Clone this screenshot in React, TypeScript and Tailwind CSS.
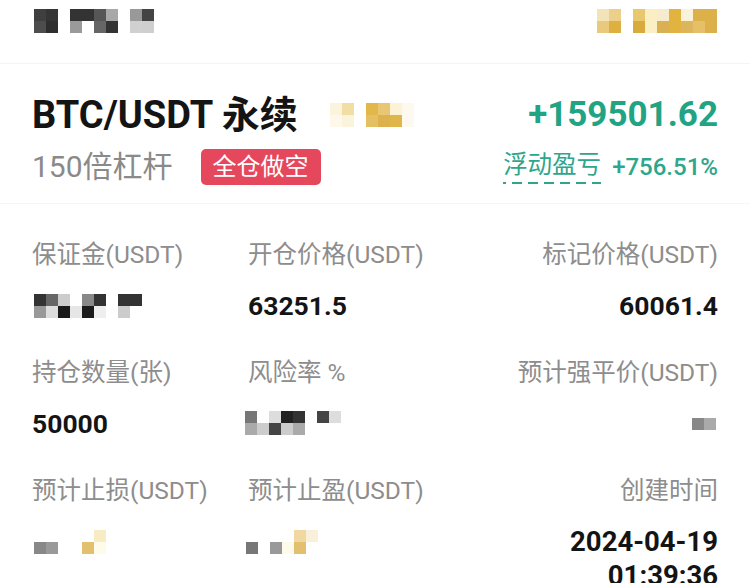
import React from "react";

type Col = [string, string];

// mosaic blocks that hide private values in the source picture
const topLeft: Col[] = [
  ["bg-[#3f3f3f]", "bg-[#4d4d4d]"],
  ["bg-[#353535]", "bg-[#2e2e2e]"],
  ["", ""],
  ["bg-[#333333]", "bg-[#9a9a9a]"],
  ["bg-[#333333]", ""],
  ["bg-[#565656]", "bg-[#666666]"],
  ["bg-[#a8a8a8]", "bg-[#333333]"],
  ["", ""],
  ["bg-[#999999]", "bg-[#d0d0d0]"],
  ["bg-[#444444]", "bg-[#cfcfcf]"],
];

const topRight: Col[] = [
  ["bg-[#f3e3b8]", "bg-[#e9c97c]"],
  ["bg-[#ecd08a]", "bg-[#ddb03f]"],
  ["", ""],
  ["bg-[#e8c76e]", "bg-[#d9ab3e]"],
  ["bg-[#fbeec2]", "bg-[#fbefc6]"],
  ["bg-[#f6eccd]", "bg-[#d9b152]"],
  ["bg-[#e2b33f]", "bg-[#e2b33f]"],
  ["bg-[#fbf3d9]", "bg-[#dcb55c]"],
  ["bg-[#ddb14a]", "bg-[#e5c068]"],
  ["bg-[#ddb14a]", "bg-[#ddb04a]"],
];

const titleTag: Col[] = [
  ["bg-[#fbf4dc]", "bg-[#fdf8ea]"],
  ["bg-[#f1dea4]", "bg-[#fbf4dc]"],
  ["", ""],
  ["bg-[#e3b84a]", "bg-[#e5c063]"],
  ["bg-[#e8c674]", "bg-[#ddb14d]"],
  ["bg-[#fcf3d6]", "bg-[#e0b54a]"],
  ["bg-[#fdf9ee]", "bg-[#fdf9f0]"],
];

const margin: Col[] = [
  ["bg-[#333333]", "bg-[#999999]"],
  ["bg-[#666666]", "bg-[#dddddd]"],
  ["bg-[#cccccc]", "bg-[#1a1a1a]"],
  ["", "bg-[#e6e6e6]"],
  ["bg-[#888888]", "bg-[#1a1a1a]"],
  ["bg-[#333333]", "bg-[#eeeeee]"],
  ["", ""],
  ["bg-[#333333]", "bg-[#cccccc]"],
  ["bg-[#333333]", ""],
];

const risk: Col[] = [
  ["bg-[#777777]", "bg-[#aaaaaa]"],
  ["", "bg-[#cccccc]"],
  ["bg-[#dddddd]", "bg-[#444444]"],
  ["bg-[#222222]", "bg-[#cccccc]"],
  ["bg-[#333333]", "bg-[#aaaaaa]"],
  ["", ""],
  ["bg-[#444444]", ""],
  ["bg-[#dddddd]", ""],
];

const liq: Col[] = [
  ["", "bg-[#888888]"],
  ["", "bg-[#aaaaaa]"],
];

const stopLoss: Col[] = [
  ["", "bg-[#888888]"],
  ["", "bg-[#999999]"],
  ["", ""],
  ["", ""],
  ["", "bg-[#e2c070]"],
  ["bg-[#f8ecc4]", "bg-[#fffbea]"],
];

const takeProfit: Col[] = [
  ["", "bg-[#777777]"],
  ["", ""],
  ["", "bg-[#999999]"],
  ["", "bg-[#fffbea]"],
  ["bg-[#f0d8a0]", "bg-[#e2c070]"],
  ["bg-[#f8f0da]", ""],
];

function Mosaic({ cols, className = "" }: { cols: Col[]; className?: string }) {
  return (
    <div className={`flex ${className}`}>
      {cols.map((c, i) => (
        <div key={i} className="flex flex-col">
          <div className={`h-3 w-3 ${c[0]}`} />
          <div className={`h-3 w-3 ${c[1]}`} />
        </div>
      ))}
    </div>
  );
}

function Label({ children, right }: { children: React.ReactNode; right?: boolean }) {
  return (
    <div className={`text-[24.5px] leading-[34px] text-[#8d8d8d] whitespace-nowrap ${right ? "text-right" : ""}`}>
      {children}
    </div>
  );
}

function Value({ children, right }: { children: React.ReactNode; right?: boolean }) {
  return (
    <div
      className={`mt-[17px] min-h-[34px] text-[26.5px] font-bold leading-[34px] text-[#141414] ${
        right ? "flex flex-col items-end text-right" : "flex items-center"
      }`}
    >
      {children}
    </div>
  );
}

export default function App() {
  return (
    <div className="h-[583px] w-[750px] overflow-hidden bg-white font-[Roboto,'Noto_Sans_CJK_SC',sans-serif]">
      {/* top bar */}
      <div className="flex h-[64px] items-start justify-between border-b border-[#f4f4f4] pl-[34px] pr-[33px] pt-[9px]">
        <Mosaic cols={topLeft} />
        <Mosaic cols={topRight} />
      </div>

      {/* position header */}
      <div className="border-b border-[#f6f6f6] px-8 pb-4 pt-[29px]">
        <div className="flex h-[44px] items-center justify-between">
          <div className="flex items-center">
            <span className="text-[38px] font-bold leading-[44px] text-[#141414]">BTC/USDT 永续</span>
            <Mosaic cols={titleTag} className="ml-8" />
          </div>
          <span className="text-[35px] font-bold leading-[44px] text-[#21a483]">+159501.62</span>
        </div>
        <div className="mt-[10px] flex h-[40px] items-center justify-between">
          <div className="flex items-center">
            <span className="text-[30px] leading-[40px] text-[#8a8a8a]">150倍杠杆</span>
            <span className="ml-7 flex h-[36px] items-center rounded-[5px] bg-[#e5475d] px-3 text-[24px] text-white">
              全仓做空
            </span>
          </div>
          <div className="flex items-center">
            <span className="bg-[linear-gradient(to_right,#2ea68c_62%,transparent_0)] bg-[length:16px_2px] bg-bottom bg-repeat-x pb-[4px] text-[24.5px] leading-[30px] text-[#2ea68c]">
              浮动盈亏
            </span>
            <span className="ml-[11px] text-[24px] font-medium leading-[30px] text-[#2ea68c]">+756.51%</span>
          </div>
        </div>
      </div>

      {/* details grid */}
      <div className="grid grid-cols-[216px_1fr_auto] gap-y-[33px] px-8 pt-[34px]">
        <div>
          <Label>保证金(USDT)</Label>
          <Value>
            <Mosaic cols={margin} className="ml-[2px]" />
          </Value>
        </div>
        <div>
          <Label>开仓价格(USDT)</Label>
          <Value>63251.5</Value>
        </div>
        <div>
          <Label right>标记价格(USDT)</Label>
          <Value right>60061.4</Value>
        </div>

        <div>
          <Label>持仓数量(张)</Label>
          <Value>50000</Value>
        </div>
        <div>
          <Label>风险率 %</Label>
          <Value>
            <Mosaic cols={risk} className="-ml-[3px] mt-[-2px]" />
          </Value>
        </div>
        <div>
          <Label right>预计强平价(USDT)</Label>
          <Value right>
            <Mosaic cols={liq} className="mr-[2px] mt-[-1px]" />
          </Value>
        </div>

        <div>
          <Label>预计止损(USDT)</Label>
          <Value>
            <Mosaic cols={stopLoss} className="ml-[2px]" />
          </Value>
        </div>
        <div>
          <Label>预计止盈(USDT)</Label>
          <Value>
            <Mosaic cols={takeProfit} className="-ml-[2px]" />
          </Value>
        </div>
        <div>
          <Label right>创建时间</Label>
          <Value right>
            <span className="text-[27.5px]">2024-04-19</span>
            <span className="text-[27.5px]">01:39:36</span>
          </Value>
        </div>
      </div>
    </div>
  );
}
